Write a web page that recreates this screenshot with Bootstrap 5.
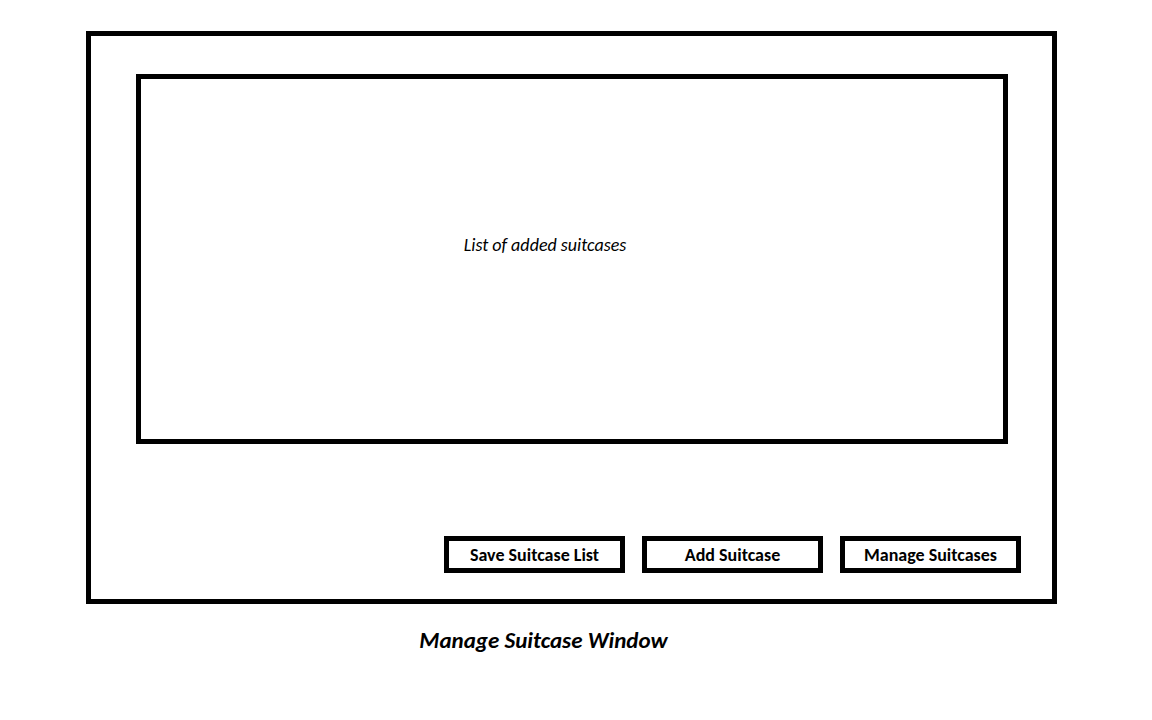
<!DOCTYPE html>
<html lang="en">
<head>
<meta charset="utf-8">
<meta name="viewport" content="width=device-width, initial-scale=1">
<title>Manage Suitcase Window</title>
<link href="https://cdn.jsdelivr.net/npm/bootstrap@5.3.0/dist/css/bootstrap.min.css" rel="stylesheet">
<style>
  body { font-family: Carlito, Calibri, Lato, sans-serif; color: #000; background: #fff; }
  .page-frame { padding: 31px 95px 0 86px; }
  .wire { border: 5px solid #000; border-radius: 0; }
  .window-body { padding: 38px 31px 26px 45px; }
  .suitcase-list { min-height: 370px; margin-right: 13px; padding-right: 54px; padding-bottom: 28px; font-size: 18px; line-height: 24px; }
  .actions { margin-top: 92px; gap: 17px; }
  .wire-btn { width: 181px; height: 37px; padding: 0; background: #fff; color: #000; font-size: 18px; font-weight: 700; line-height: 24px; }
  .wire-btn:hover { background: #eee; color: #000; border-color: #000; }
  .caption-title { margin: 20px 56px 0 0; font-size: 23px; line-height: 32px; font-weight: 700; }
</style>
</head>
<body>
<div class="container-fluid page-frame">
  <main class="wire window-body">
    <section class="wire suitcase-list d-flex align-items-center justify-content-center" aria-label="Suitcases">
      <p class="fst-italic mb-0">List of added suitcases</p>
    </section>
    <div class="actions d-flex flex-wrap justify-content-end">
      <button type="button" class="btn wire wire-btn">Save Suitcase List</button>
      <button type="button" class="btn wire wire-btn">Add Suitcase</button>
      <button type="button" class="btn wire wire-btn">Manage Suitcases</button>
    </div>
  </main>
  <h1 class="caption-title fst-italic text-center">Manage Suitcase Window</h1>
</div>
<script src="https://cdn.jsdelivr.net/npm/bootstrap@5.3.0/dist/js/bootstrap.bundle.min.js"></script>
</body>
</html>
